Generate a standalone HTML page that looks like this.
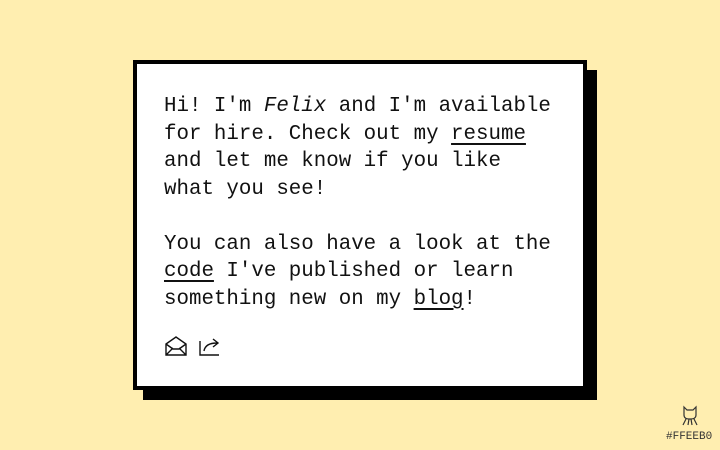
<!DOCTYPE html>
<html><head><style>
html,body{margin:0;padding:0}
body{width:720px;height:450px;background:#FFEEB0;position:relative;overflow:hidden;font-family:"Liberation Mono",monospace}
.sh{position:absolute;left:143px;top:70px;width:454px;height:330px;background:#000}
.card{position:absolute;left:133px;top:60px;width:446px;height:322px;background:#fff;border:4px solid #000}
.t{position:absolute;left:164px;top:93px;font-size:20.8px;line-height:27.5px;color:#111;white-space:pre}
.t a{color:#111;text-decoration:underline;text-underline-offset:4px;text-decoration-thickness:1.5px}
.ic{position:absolute;top:336px}
.tag{position:absolute;left:666px;top:431px;font-size:11px;color:#333}
</style></head><body>
<div class="sh"></div><div class="card"></div>
<div class="t">Hi! I'm <i>Felix</i> and I'm available
for hire. Check out my <a>resume</a>
and let me know if you like
what you see!

You can also have a look at the
<a>code</a> I've published or learn
something new on my <a>blog</a>!</div>
<svg class="ic" style="left:165px" width="22" height="20" viewBox="0 0 22 20" fill="none" stroke="#111" stroke-width="1.4"><path d="M1 8 L11 1 L21 8 V19 H1 Z M1 19 L8 12 M21 19 L14 12 M1 8 L8 13 H14 L21 8"/></svg>
<svg class="ic" style="left:198px" width="24" height="20" viewBox="0 0 24 20" fill="none" stroke="#111" stroke-width="1.4"><path d="M2 5 V19 H21 M6 15 C7 9 12 7 19 7 M15 3 L20 7 L15 11"/></svg>
<svg style="position:absolute;left:680px;top:405px" width="20" height="22" viewBox="0 0 20 22" fill="none" stroke="#333" stroke-width="1.2"><path d="M4 2 L7 5 H13 L16 2 V10 C16 13 14 14 10 14 C6 14 4 13 4 10 Z M6 14 L3 20 M9 14 L8 20 M11 14 L12 20 M14 14 L17 20"/></svg>
<div class="tag">#FFEEB0</div>
</body></html>
